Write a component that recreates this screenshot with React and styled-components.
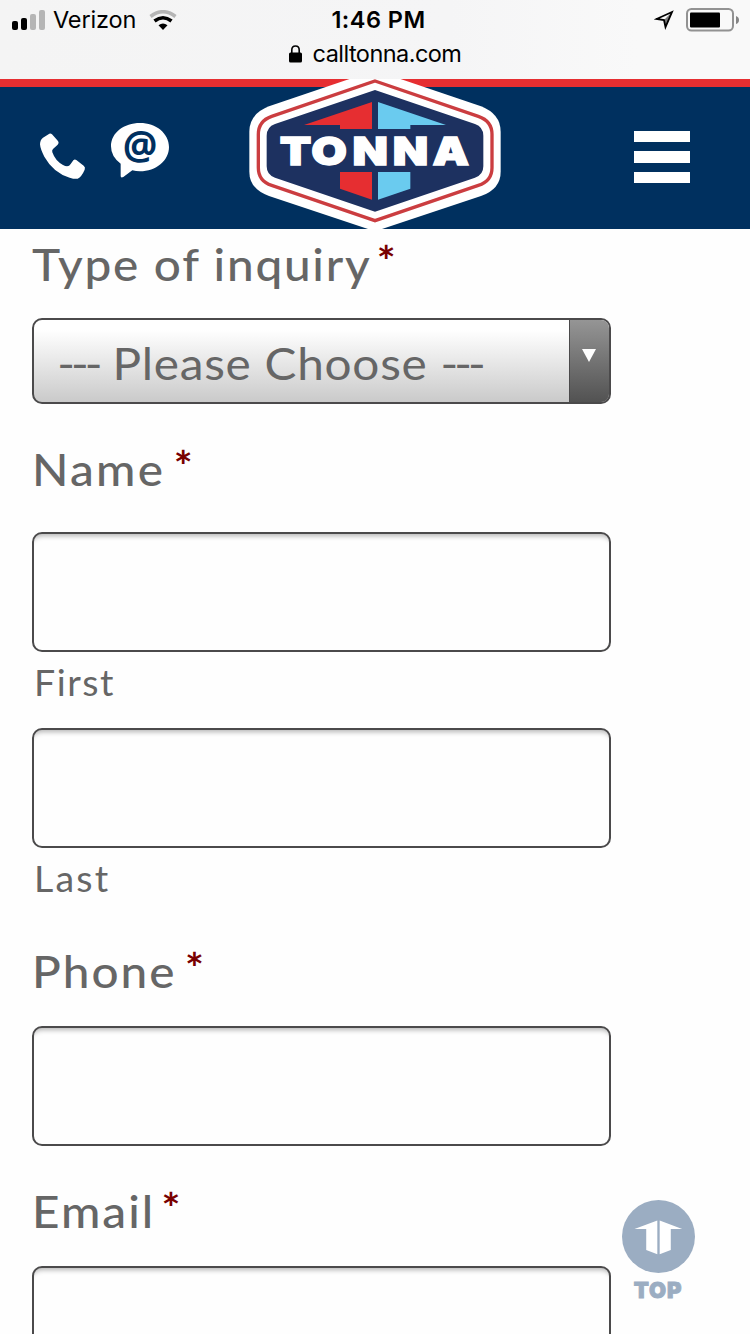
import React from "react";
import styled, { createGlobalStyle } from "styled-components";

const GlobalStyle = createGlobalStyle`
  * { box-sizing: border-box; }
  body { margin: 0; background: #fefefe; }
`;

const Page = styled.div`
  position: relative;
  width: 750px;
  height: 1334px;
  overflow: hidden;
  background: #fefefe;
  color: #666;
  font-family: Lato, "Open Sans", sans-serif;
`;

const BrowserBar = styled.div`
  height: 79px;
  background: linear-gradient(90deg, #f4f4f4 0%, #f5f5f6 60%, #f9f9f9 85%);
  color: #000;
  font-family: Inter, "Liberation Sans", sans-serif;
`;

const StatusRow = styled.div`
  display: grid;
  grid-template-columns: 1fr auto 1fr;
  align-items: center;
  height: 40px;
  padding: 0 11px 0 12px;
`;

const StatusGroup = styled.div`
  display: flex;
  align-items: center;
  justify-content: ${(p) => p.$align || "flex-start"};
  gap: ${(p) => p.$gap}px;
`;

const Carrier = styled.span`
  font-size: 23.5px;
  line-height: 40px;
  letter-spacing: -0.15px;
  margin-right: 5px;
`;

const Clock = styled.span`
  padding-left: 6px;
  font-size: 23.5px;
  line-height: 40px;
  font-weight: 600;
  letter-spacing: 0.45px;
`;

const AddressRow = styled.div`
  display: flex;
  align-items: center;
  justify-content: center;
  height: 27px;
  gap: 11px;
  font-size: 23.5px;
  letter-spacing: -0.55px;
`;

const SiteHeader = styled.header`
  display: grid;
  grid-template-columns: 1fr 252px 1fr;
  height: 150px;
  background: linear-gradient(#e62e31 0 8px, #00305f 8px);
`;

const Contact = styled.div`
  display: flex;
  align-items: flex-start;
  gap: 25px;
  padding: 44px 0 0 39px;
`;

const PhoneIcon = styled.svg`
  margin-top: 10px;
`;

const ChatIcon = styled.svg`
  overflow: visible;
`;

const MenuButton = styled.button`
  display: flex;
  flex-direction: column;
  justify-self: end;
  gap: 9px;
  width: 56px;
  margin: 52px 60px 0 0;
  padding: 0;
  border: 0;
  background: none;
  height: 52px;
`;

const MenuBar = styled.span`
  width: 56px;
  height: 11.3px;
  background: #fff;
`;

const Form = styled.form`
  display: flex;
  flex-direction: column;
  width: 611px;
  padding: 5px 0 0 32px;
`;

const Label = styled.label`
  height: 60px;
  margin: ${(p) => p.$before || 0}px 0 ${(p) => p.$after || 25}px;
  font-size: 45px;
  line-height: 60px;
  font-weight: 500;
  letter-spacing: ${(p) => p.$spacing || 1.9}px;
  white-space: nowrap;
  transform: scaleX(1.06);
  transform-origin: left;
`;

const Required = styled.span`
  display: inline-block;
  margin-left: ${(p) => p.$gap || 5}px;
  color: #790000;
  font-weight: 700;
  font-size: 42px;
  line-height: 40px;
  transform: translateY(-4px);
`;

const Select = styled.div`
  display: flex;
  height: 86px;
  border: 2px solid #4b4a4b;
  border-radius: 10px;
  overflow: hidden;
  background: linear-gradient(#fff 12%, #cacaca);
`;

const SelectValue = styled.span`
  flex: 1;
  padding-left: 22px;
  font-size: 45px;
  line-height: 86px;
  letter-spacing: 0.7px;
  white-space: nowrap;
  transform: scaleX(1.061);
  transform-origin: left;
`;

const Dashes = styled.span`
  margin-right: ${(p) => p.$after || 0}px;
  letter-spacing: -3.8px;
`;

const SelectArrow = styled.span`
  position: relative;
  display: flex;
  justify-content: center;
  width: 40px;
  padding: 29px 2px 0 0;
  border-left: 1px solid #4b4a4b;
  background: linear-gradient(#959595, #525252);
`;

const Input = styled.input`
  flex: none;
  width: 579px;
  height: 120px;
  padding: 0 20px;
  border: 2px solid #4b4a4b;
  border-radius: 10px;
  background: #fefefe;
  box-shadow: inset 0 7px 5px -5px #b4b4b4;
  outline: none;
`;

const SubLabel = styled.span`
  height: 44px;
  margin: 8px 0 ${(p) => p.$after}px 2px;
  font-size: 37.5px;
  line-height: 44px;
  letter-spacing: ${(p) => p.$spacing}px;
`;

const TopLink = styled.a`
  position: absolute;
  left: 618px;
  top: 1200px;
  display: flex;
  flex-direction: column;
  align-items: center;
  width: 80px;
  gap: 5px;
  color: #9badc2;
  font: 900 22px/24px Inter, sans-serif;
  letter-spacing: 0.8px;
  -webkit-text-stroke: 0.9px #9badc2;
`;

const Logo = () => (
  <svg width="252" height="150" viewBox="42 12 756 450">
    <path fill="#fff" d="M420-14 738 94Q797 117 797 170V290Q797 342 738 363L420 469 102 363Q43 342 43 290V170Q43 117 102 94Z" />
    <path fill="none" stroke="#cb3d40" strokeWidth="10" d="M420 18 730 124Q771 138 771 178V278Q771 318 730 331L420 437 110 331Q70 318 70 278V178Q70 138 110 124Z" />
    <path fill="#1d3160" d="M420 45 720 147Q745 156 745 182V274Q745 300 720 308L420 410 120 308Q95 300 95 274V182Q95 156 120 147Z" />
    <path fill="#e62e31" d="M411 81V162H315V150H207ZM315 291H411V374L315 341Z" />
    <path fill="#6acbef" d="M429 81 633 150H526V162H429ZM429 291H526V341L429 374Z" />
    <text x="114 194 299 401 502" y="269" transform="scale(1.18 1)" fill="#fff" stroke="#fff" strokeWidth="4" fontFamily="Inter, sans-serif" fontWeight="900" fontSize="117">TONNA</text>
  </svg>
);

const Star = ({ gap }) => <Required $gap={gap}>*</Required>;

export default function App() {
  return (
    <Page>
      <GlobalStyle />
      <BrowserBar>
        <StatusRow>
          <StatusGroup $gap={8}>
            <svg width="33" height="20" viewBox="0 0 33 20">
              <rect y="11" width="6" height="9" rx="2" />
              <rect x="9" y="8" width="6" height="12" rx="2" />
              <rect x="18" y="4" width="6" height="16" rx="2" fill="#b5b5b5" />
              <rect x="27" width="6" height="20" rx="2" fill="#b5b5b5" />
            </svg>
            <Carrier>Verizon</Carrier>
            <svg width="28" height="20" viewBox="0 0 28 20" fill="none">
              <path d="M1.500 6.500Q14-3 26.500 6.500" stroke="#b5b5b5" strokeWidth="3.600" />
              <path d="M5.500 11Q14 4.500 22.500 11" stroke="#000" strokeWidth="3.600" />
              <path d="M9.500 15.300Q14 11.700 18.500 15.300L14 20Z" fill="#000" />
            </svg>
          </StatusGroup>
          <Clock>1:46 PM</Clock>
          <StatusGroup $align="flex-end" $gap={12}>
            <svg width="20" height="20" viewBox="0 0 20 20">
              <path fill="none" stroke="#000" strokeWidth="1.800" d="M18 2 2.500 9 10 10 11.500 17Z" />
              <path d="M10 10 18 2 11.500 17Z" opacity=".5" />
            </svg>
            <svg width="53" height="24" viewBox="0 0 53 24">
              <rect x="1" y="1" width="46" height="21.500" rx="4.500" fill="none" stroke="#929292" strokeWidth="2" />
              <rect x="4" y="4.500" width="30" height="15" rx="1" />
              <path d="M50 8Q53 9 53 12T50 16Z" fill="#858585" />
            </svg>
          </StatusGroup>
        </StatusRow>
        <AddressRow>
          <svg width="13" height="18" viewBox="0 0 13 18">
            <rect y="7.500" width="13" height="10" rx="1.500" />
            <path d="M2.800 8V5Q2.800 1 6.500 1T10.200 5V8" fill="none" stroke="#000" strokeWidth="1.600" />
          </svg>
          <span>calltonna.com</span>
        </AddressRow>
      </BrowserBar>
      <SiteHeader>
        <Contact>
          <PhoneIcon width="47" height="47" viewBox="57 70 141 141">
            <path fill="#fff" d="M88 72Q92 70 96 74L112 92Q119 99 113 105L99 118Q95 122 97 128Q106 154 129 166Q145 175 152 163L160 152Q164 147 169 151L191 168Q197 173 194 180Q185 201 173 207Q165 209 149 204Q100 189 73 141Q61 118 60 104Q60 91 69 84Z" />
          </PhoneIcon>
          <ChatIcon width="58" height="56" viewBox="273 38 174 168">
            <path fill="#fff" d="M360 38C312 38 273 67 273 108Q273 139 302 160V197Q302 204 310 200L337 180Q348 183 360 183C408 183 447 151 447 110S408 38 360 38Z" />
            <text x="308" y="145" textLength="104" lengthAdjust="spacingAndGlyphs" fontFamily="'Open Sans', sans-serif" fontWeight="700" fontSize="120" fill="#00305f">@</text>
          </ChatIcon>
        </Contact>
        <Logo />
        <MenuButton aria-label="Menu">
          <MenuBar />
          <MenuBar />
          <MenuBar />
        </MenuButton>
      </SiteHeader>
      <Form>
        <Label $after={24} $spacing={1.65}>Type of inquiry<Star /></Label>
        <Select>
          <SelectValue><Dashes $after={1}>---</Dashes> Please Choose <Dashes>---</Dashes></SelectValue>
          <SelectArrow>
            <svg width="14" height="13" viewBox="0 0 14 13"><path d="M0 0H14L7 13Z" fill="#fff" /></svg>
          </SelectArrow>
        </Select>
        <Label $before={35} $after={33} $spacing={2.1}>Name<Star gap={8} /></Label>
        <Input />
        <SubLabel $after={24} $spacing={1.5}>First</SubLabel>
        <Input />
        <SubLabel $after={41} $spacing={2.2}>Last</SubLabel>
        <Label>Phone<Star gap={8} /></Label>
        <Input />
        <Label $before={35}>Email<Star gap={6} /></Label>
        <Input />
      </Form>
      <TopLink>
        <svg width="73" height="73" viewBox="66 62 217 217">
          <circle cx="174.500" cy="170.500" r="108.500" fill="#9badc2" />
          <path fill="#fff" d="M171 123V223L138 211V148H103ZM178 123 245 148H211V211L178 223Z" />
        </svg>
        <span>TOP</span>
      </TopLink>
    </Page>
  );
}
